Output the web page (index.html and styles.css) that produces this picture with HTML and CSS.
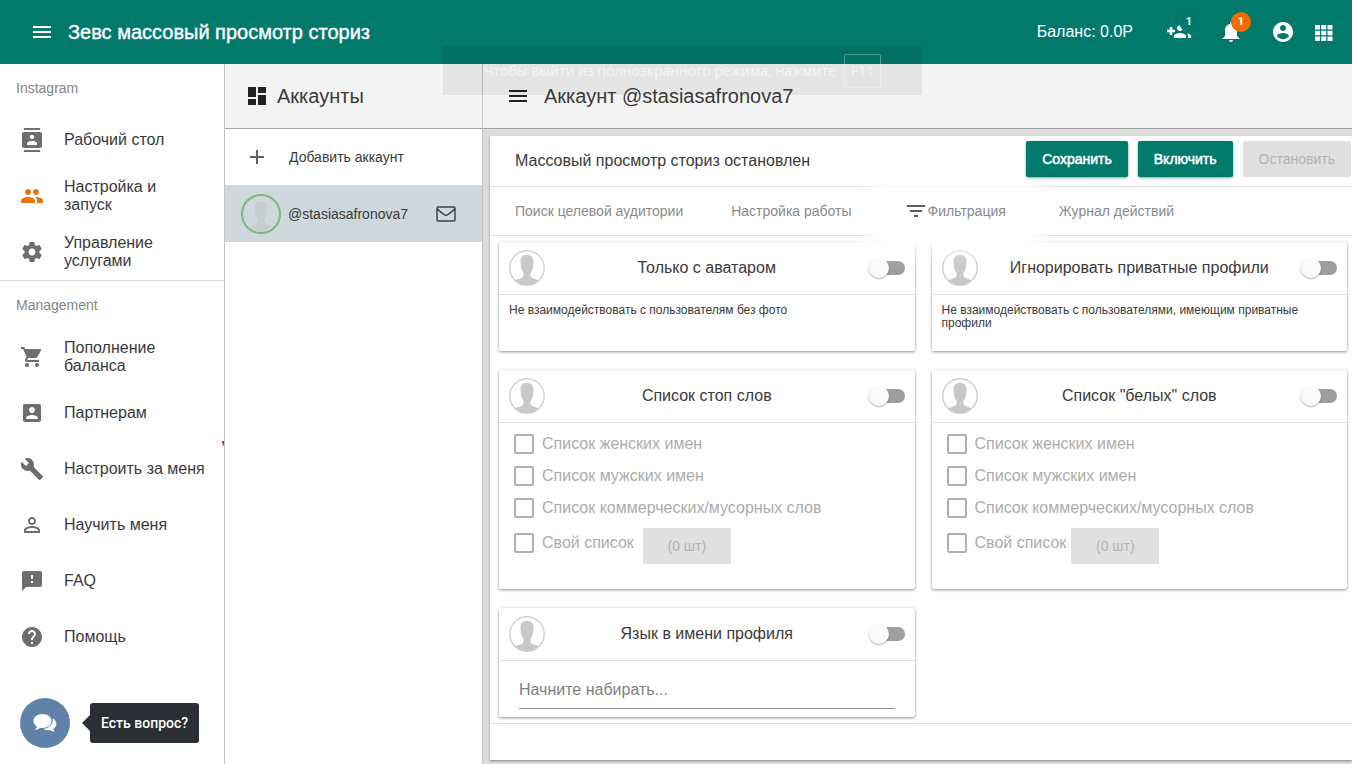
FILE: index.html
```html
<!DOCTYPE html>
<html lang="ru">
<head>
    <meta charset="utf-8">
    <meta name="viewport" content="width=device-width, initial-scale=1">
    <title>Зевс массовый просмотр сториз</title>
    <link rel="stylesheet" href="styles.css">
</head>
<body>
    <svg class="sprite" aria-hidden="true">
        <symbol id="menu" viewBox="0 0 24 24"><path d="M3 18h18v-2H3v2zm0-5h18v-2H3v2zm0-7v2h18V6H3z"/></symbol>
        <symbol id="avatar" viewBox="0 0 36 36">
            <circle cx="18" cy="18" r="17.200" fill="#fff" stroke="#d0d0d0" stroke-width="1.400"/>
            <path fill="#c8c8c8" d="M18 5c-5 0-6.500 2.500-6.500 6.500 0 4.500.8 8.500 3 11.500v3c-.5 2.500-5.500 2.800-8.200 4.200C9 33.300 13 35.200 18 35.200s9-1.900 11.700-5c-2.700-1.400-7.700-1.700-8.200-4.200v-3c2.200-3 3-7 3-11.500C24.500 7.500 23 5 18 5z"/>
        </symbol>
    </svg>

    <header class="header">
        <button class="icon-btn" aria-label="Меню"><svg class="icon"><use href="#menu"/></svg></button>
        <h1 class="header-title">Зевс массовый просмотр сториз</h1>
        <span class="balance">Баланс: 0.0Р</span>
        <div class="header-actions">
            <button class="icon-btn" aria-label="Рефералы">
                <svg class="icon" viewBox="0 0 24 24"><path d="M8 9.700H5.300V7H2.700v2.700H0v2.600h2.700V15h2.600v-2.700H8V9.700zm10 1.300c1.660 0 2.990-1.340 2.990-3S19.660 5 18 5c-.32 0-.63.05-.91.14.57.81.9 1.790.9 2.860s-.34 2.040-.9 2.860c.28.09.59.14.91.14zm-5 0c1.660 0 2.990-1.340 2.990-3S14.660 5 13 5s-3 1.340-3 3 1.340 3 3 3zm6.620 2.160c.83.73 1.380 1.660 1.380 2.840v2h3v-2c0-1.540-2.370-2.490-4.380-2.840zM13 13c-2 0-6 1-6 3v2h12v-2c0-2-4-3-6-3z"/></svg>
                <span class="badge">1</span>
            </button>
            <button class="icon-btn" aria-label="Уведомления">
                <svg class="icon" viewBox="0 0 24 24"><path d="M14 20a2 2 0 0 1-4 0h4zM12 2a1 1 0 0 1 1 1v1.080c2.840.48 5 2.950 5 5.920v6l3 3H3l3-3v-6c0-2.970 2.160-5.440 5-5.920V3a1 1 0 0 1 1-1z"/></svg>
                <span class="badge badge-orange">1</span>
            </button>
            <button class="icon-btn" aria-label="Профиль">
                <svg class="icon" viewBox="0 0 24 24"><path d="M12 2C6.480 2 2 6.480 2 12s4.480 10 10 10 10-4.480 10-10S17.520 2 12 2zm0 3c1.660 0 3 1.340 3 3s-1.340 3-3 3-3-1.340-3-3 1.340-3 3-3zm0 14.200c-2.500 0-4.710-1.280-6-3.220.03-1.990 4-3.080 6-3.080 1.990 0 5.970 1.090 6 3.080-1.290 1.940-3.500 3.220-6 3.220z"/></svg>
            </button>
        </div>
        <button class="icon-btn" aria-label="Приложения">
            <svg class="icon" viewBox="0 0 24 24"><path d="M3 5h5v4.500H3zM9.200 5h5v4.500h-5zM15.500 5h5v4.500h-5zM3 10.700h5v4.500H3zM9.200 10.700h5v4.500h-5zM15.500 10.700h5v4.500h-5zM3 16.400h5v4.500H3zM9.200 16.400h5v4.500h-5zM15.500 16.400h5v4.500h-5z"/></svg>
        </button>
    </header>

    <div class="layout">
        <nav class="sidebar">
            <div class="nav-group">
                <h2 class="nav-title">Instagram</h2>
                <a class="nav-item" href="#">
                    <svg class="icon" viewBox="0 0 24 24"><path d="M20 0H4v2h16V0zM4 24h16v-2H4v2zM20 4H4c-1.100 0-2 .9-2 2v12c0 1.100.9 2 2 2h16c1.100 0 2-.9 2-2V6c0-1.100-.9-2-2-2zm-8 2.750c1.240 0 2.250 1.010 2.250 2.250s-1.010 2.250-2.250 2.250S9.750 10.240 9.750 9 10.760 6.750 12 6.750zM17 17H7v-1.500c0-1.670 3.330-2.500 5-2.500s5 .83 5 2.500V17z"/></svg>
                    <span>Рабочий стол</span>
                </a>
                <a class="nav-item active" href="#">
                    <svg class="icon" viewBox="0 0 24 24"><path d="M16 11c1.660 0 2.990-1.340 2.990-3S17.660 5 16 5c-1.660 0-3 1.340-3 3s1.340 3 3 3zm-8 0c1.660 0 2.990-1.340 2.990-3S9.660 5 8 5C6.340 5 5 6.340 5 8s1.340 3 3 3zm0 2c-2.330 0-7 1.170-7 3.500V19h14v-2.500c0-2.330-4.670-3.500-7-3.500zm8 0c-.29 0-.62.02-.97.05 1.160.84 1.970 1.970 1.970 3.450V19h6v-2.500c0-2.330-4.670-3.500-7-3.500z"/></svg>
                    <span>Настройка и<br>запуск</span>
                </a>
                <a class="nav-item" href="#">
                    <svg class="icon" viewBox="0 0 24 24"><path d="M19.430 12.980c.04-.32.07-.64.07-.98s-.03-.66-.07-.98l2.110-1.650c.19-.15.24-.42.12-.64l-2-3.460c-.12-.22-.39-.3-.61-.22l-2.490 1c-.52-.4-1.080-.73-1.690-.98l-.38-2.650C14.460 2.180 14.250 2 14 2h-4c-.25 0-.46.18-.49.42l-.38 2.650c-.61.25-1.170.59-1.690.98l-2.490-1c-.23-.09-.49 0-.61.22l-2 3.460c-.13.22-.07.49.12.64l2.110 1.650c-.04.32-.07.65-.07.98s.03.66.07.98l-2.110 1.650c-.19.15-.24.42-.12.64l2 3.460c.12.22.39.3.61.22l2.490-1c.52.4 1.080.73 1.690.98l.38 2.650c.03.24.24.42.49.42h4c.25 0 .46-.18.49-.42l.38-2.650c.61-.25 1.170-.59 1.690-.98l2.490 1c.23.09.49 0 .61-.22l2-3.460c.12-.22.07-.49-.12-.64l-2.110-1.650zM12 15.500c-1.930 0-3.500-1.570-3.500-3.500s1.570-3.500 3.500-3.500 3.500 1.570 3.500 3.500-1.570 3.500-3.500 3.500z"/></svg>
                    <span>Управление услугами</span>
                </a>
            </div>
            <div class="nav-group">
                <h2 class="nav-title">Management</h2>
                <a class="nav-item" href="#">
                    <svg class="icon" viewBox="0 0 24 24"><path d="M7 18c-1.100 0-1.990.9-1.990 2S5.900 22 7 22s2-.9 2-2-.9-2-2-2zM1 2v2h2l3.600 7.590-1.350 2.450c-.16.28-.25.61-.25.96 0 1.100.9 2 2 2h12v-2H7.420c-.14 0-.25-.11-.25-.25l.03-.12.9-1.630h7.450c.75 0 1.410-.41 1.750-1.030l3.580-6.490c.08-.14.12-.31.12-.48 0-.55-.45-1-1-1H5.210l-.94-2H1zm16 16c-1.100 0-1.990.9-1.990 2s.89 2 1.990 2 2-.9 2-2-.9-2-2-2z"/></svg>
                    <span>Пополнение баланса</span>
                </a>
                <a class="nav-item" href="#">
                    <svg class="icon" viewBox="0 0 24 24"><path d="M3 5v14c0 1.100.89 2 2 2h14c1.100 0 2-.9 2-2V5c0-1.100-.9-2-2-2H5c-1.110 0-2 .9-2 2zm12 4c0 1.660-1.340 3-3 3s-3-1.340-3-3 1.340-3 3-3 3 1.340 3 3zm-9 8c0-2 4-3.100 6-3.100s6 1.100 6 3.100v1H6v-1z"/></svg>
                    <span>Партнерам</span>
                </a>
                <a class="nav-item nav-item-new" href="#">
                    <svg class="icon" viewBox="0 0 24 24"><path d="M22.700 19l-9.100-9.100c.9-2.300.4-5-1.500-6.900-2-2-5-2.400-7.400-1.300L9 6 6 9 1.600 4.700C.4 7.100.9 10.100 2.900 12.100c1.900 1.900 4.600 2.400 6.900 1.500l9.100 9.100c.4.4 1 .4 1.400 0l2.300-2.300c.5-.4.5-1.100.1-1.400z"/></svg>
                    <span>Настроить за меня</span>
                </a>
                <a class="nav-item" href="#">
                    <svg class="icon" viewBox="0 0 24 24"><path d="M12 5.900c1.160 0 2.100.94 2.100 2.100s-.94 2.100-2.100 2.100S9.900 9.160 9.900 8s.94-2.100 2.100-2.100m0 9c2.970 0 6.100 1.460 6.100 2.100v1.100H5.900V17c0-.64 3.130-2.100 6.100-2.100M12 4C9.790 4 8 5.790 8 8s1.790 4 4 4 4-1.790 4-4-1.790-4-4-4zm0 9c-2.670 0-8 1.340-8 4v3h16v-3c0-2.660-5.330-4-8-4z"/></svg>
                    <span>Научить меня</span>
                </a>
                <a class="nav-item" href="#">
                    <svg class="icon" viewBox="0 0 24 24"><path d="M20 2H4c-1.100 0-1.990.9-1.990 2L2 22l4-4h14c1.100 0 2-.9 2-2V4c0-1.100-.9-2-2-2zm-7 12h-2v-2h2v2zm0-4h-2V6h2v4z"/></svg>
                    <span>FAQ</span>
                </a>
                <a class="nav-item" href="#">
                    <svg class="icon" viewBox="0 0 24 24"><path d="M12 2C6.480 2 2 6.480 2 12s4.480 10 10 10 10-4.480 10-10S17.520 2 12 2zm1 17h-2v-2h2v2zm2.070-7.750l-.9.92C13.450 12.900 13 13.500 13 15h-2v-.5c0-1.100.45-2.100 1.170-2.830l1.240-1.260c.37-.36.59-.86.59-1.410 0-1.100-.9-2-2-2s-2 .9-2 2H8c0-2.210 1.790-4 4-4s4 1.790 4 4c0 .88-.36 1.680-.93 2.250z"/></svg>
                    <span>Помощь</span>
                </a>
            </div>
        </nav>

        <section class="accounts">
            <div class="toolbar">
                <svg class="icon" viewBox="0 0 24 24"><path d="M3 13h8V3H3v10zm0 8h8v-6H3v6zm10 0h8V11h-8v10zm0-18v6h8V3h-8z"/></svg>
                <h2 class="toolbar-title">Аккаунты</h2>
            </div>
            <button class="account-row add-account">
                <svg class="icon" viewBox="0 0 24 24"><path d="M19 13h-6v6h-2v-6H5v-2h6V5h2v6h6v2z"/></svg>
                <span>Добавить аккаунт</span>
            </button>
            <a class="account-row selected" href="#">
                <svg class="account-photo" viewBox="0 0 40 40">
                    <circle cx="20" cy="20" r="19" fill="none" stroke="#7cb97f" stroke-width="2"/>
                    <path fill="#c9cccd" d="M20 7c-5 0-6.500 2.500-6.500 6.500 0 4.500.8 8.500 3 11.500v3c-.5 2.500-4.500 3-6.500 4.500 2.500 3 6 4.500 10 4.500s7.500-1.500 10-4.500c-2-1.500-6-2-6.500-4.500v-3c2.200-3 3-7 3-11.500C26.500 9.500 25 7 20 7z"/>
                </svg>
                <span>@stasiasafronova7</span>
                <svg class="mail" viewBox="0 0 20 16"><path d="M1 2.500V14q0 1 1 1h16q1 0 1-1V2q0-1-1-1H2Q1 1 1 2.500q1.500 2 7 6 2 1.500 4 0 5.500-4 7-6" fill="none" stroke="currentColor" stroke-width="1.500"/></svg>
            </a>
        </section>

        <main class="main">
            <div class="toolbar">
                <button class="icon-btn" aria-label="Список аккаунтов"><svg class="icon"><use href="#menu"/></svg></button>
                <h2 class="toolbar-title">Аккаунт @stasiasafronova7</h2>
            </div>
            <div class="content">
                <div class="panel">
                    <div class="panel-head">
                        <h3 class="panel-title">Массовый просмотр сториз остановлен</h3>
                        <button class="btn btn-primary">Сохранить</button>
                        <button class="btn btn-primary">Включить</button>
                        <button class="btn" disabled>Остановить</button>
                    </div>
                    <div class="tabs">
                        <a class="tab" href="#">Поиск целевой аудитории</a>
                        <a class="tab" href="#">Настройка работы</a>
                        <a class="tab tab-active" href="#">
                            <svg class="icon" viewBox="0 0 24 24"><path d="M10 18h4v-2h-4v2zM3 6v2h18V6H3zm3 7h12v-2H6v2z"/></svg>
                            <span>Фильтрация</span>
                        </a>
                        <a class="tab" href="#">Журнал действий</a>
                    </div>

                    <div class="cards">
                        <section class="card">
                            <div class="card-head">
                                <svg class="avatar"><use href="#avatar"/></svg>
                                <label class="card-title" for="onlyAvatar">Только с аватаром</label>
                                <input class="switch" type="checkbox" id="onlyAvatar">
                            </div>
                            <p class="card-text">Не взаимодействовать с пользователям без фото</p>
                        </section>
                        <section class="card">
                            <div class="card-head">
                                <svg class="avatar"><use href="#avatar"/></svg>
                                <label class="card-title" for="skipPrivate">Игнорировать приватные профили</label>
                                <input class="switch" type="checkbox" id="skipPrivate">
                            </div>
                            <p class="card-text">Не взаимодействовать с пользователями, имеющим приватные профили</p>
                        </section>
                        <section class="card">
                            <div class="card-head">
                                <svg class="avatar"><use href="#avatar"/></svg>
                                <label class="card-title" for="stopWords">Список стоп слов</label>
                                <input class="switch" type="checkbox" id="stopWords">
                            </div>
                            <div class="lists">
                                <label class="check"><input type="checkbox" disabled>Список женских имен</label>
                                <label class="check"><input type="checkbox" disabled>Список мужских имен</label>
                                <label class="check"><input type="checkbox" disabled>Список коммерческих/мусорных слов</label>
                                <div class="own-list">
                                    <label class="check"><input type="checkbox" disabled>Свой список</label>
                                    <button class="btn btn-count" disabled>(0 шт)</button>
                                </div>
                            </div>
                        </section>
                        <section class="card">
                            <div class="card-head">
                                <svg class="avatar"><use href="#avatar"/></svg>
                                <label class="card-title" for="whiteWords">Список "белых" слов</label>
                                <input class="switch" type="checkbox" id="whiteWords">
                            </div>
                            <div class="lists">
                                <label class="check"><input type="checkbox" disabled>Список женских имен</label>
                                <label class="check"><input type="checkbox" disabled>Список мужских имен</label>
                                <label class="check"><input type="checkbox" disabled>Список коммерческих/мусорных слов</label>
                                <div class="own-list own-list-tight">
                                    <label class="check"><input type="checkbox" disabled>Свой список</label>
                                    <button class="btn btn-count" disabled>(0 шт)</button>
                                </div>
                            </div>
                        </section>
                        <section class="card">
                            <div class="card-head">
                                <svg class="avatar"><use href="#avatar"/></svg>
                                <label class="card-title" for="nameLang">Язык в имени профиля</label>
                                <input class="switch" type="checkbox" id="nameLang">
                            </div>
                            <div class="lang">
                                <input class="lang-input" type="text" placeholder="Начните набирать..." aria-label="Язык">
                            </div>
                        </section>
                    </div>
                    <div class="panel-foot"></div>
                </div>
            </div>
        </main>
    </div>

    <div class="fullscreen-hint">Чтобы выйти из полноэкранного режима, нажмите <kbd>F11</kbd></div>

    <div class="chat">
        <button class="chat-btn" aria-label="Чат">
            <svg class="chat-icon" viewBox="0 0 24 20"><path d="M9.500 1C4.500 1 .5 4 .5 8c0 2.300 1.300 4.200 3.300 5.500-.2 1.400-1 2.400-2 3.300 2.200 0 4-.8 5.200-2.100.8.200 1.600.3 2.500.3 5 0 9-3 9-7s-4-7-9-7z"/><path d="M19.700 5.300c.9 5.500-3.300 9.800-9.200 10.700 1.500 1.200 3.800 1.500 6.500 1.100 1.300 1 2.800 1.700 4.900 1.700-.9-.8-1.500-1.600-1.700-2.800 1.800-1 3.200-2.700 3.200-4.900 0-2.500-1.500-4.700-3.700-5.800z"/></svg>
        </button>
        <span class="chat-tip">Есть вопрос?</span>
    </div>
</body>
</html>
```
FILE: styles.css
```css
* {
    box-sizing: border-box;
}

body {
    margin: 0;
    min-height: 100vh;
    display: flex;
    flex-direction: column;
    font-family: "Liberation Sans", Arial, sans-serif;
    font-size: 16px;
    line-height: 18px;
    color: #3a3a3a;
    background: #fff;
}

h1, h2, h3, p {
    margin: 0;
    font-weight: normal;
}

a {
    color: inherit;
    text-decoration: none;
}

button {
    padding: 0;
    border: none;
    background: none;
    color: inherit;
    font-family: inherit;
    cursor: pointer;
}

.sprite {
    position: absolute;
    width: 0;
    height: 0;
}

.icon {
    display: block;
    width: 24px;
    height: 24px;
    flex-shrink: 0;
    fill: currentColor;
}

.icon-btn {
    position: relative;
    width: 24px;
    height: 24px;
}

/* header */
.header {
    display: flex;
    align-items: center;
    height: 64px;
    padding: 0 16px 0 30px;
    background: #01796b;
    color: #fff;
}

.header-title {
    flex: 1;
    margin-left: 14px;
    font-size: 20px;
    line-height: 24px;
    -webkit-text-stroke: 0.4px #fff;
}

.header-actions {
    display: flex;
    gap: 28px;
    margin: 0 17px 0 34px;
}

.badge {
    position: absolute;
    top: -8px;
    right: -8px;
    width: 20px;
    height: 20px;
    border-radius: 50%;
    background: #01796b;
    font: bold 11px/20px Roboto, sans-serif;
    text-align: center;
}

.badge-orange {
    background: #ef6c00;
}

/* layout */
.layout {
    display: flex;
    flex: 1;
}

.sidebar {
    width: 225px;
    flex-shrink: 0;
    border-right: 1px solid #c4c4c4;
}

.nav-group + .nav-group {
    border-top: 1px solid #dcdcdc;
}

.nav-title {
    padding: 0 16px;
    font-size: 14px;
    line-height: 48px;
    color: #858585;
}

.nav-item {
    position: relative;
    display: flex;
    align-items: center;
    gap: 20px;
    height: 56px;
    padding: 0 16px 0 20px;
    overflow: hidden;
}

    .nav-item .icon {
        color: #6e6e6e;
    }

    .nav-item.active .icon {
        color: #e8750a;
    }

/* dot tucked behind the sidebar edge */
.nav-item-new::after {
    content: "";
    position: absolute;
    top: -4px;
    right: -8px;
    width: 10px;
    height: 10px;
    border-radius: 50%;
    background: #c2304a;
}

.accounts {
    width: 258px;
    flex-shrink: 0;
    border-right: 1px solid #c4c4c4;
}

.toolbar {
    display: flex;
    align-items: center;
    height: 65px;
    padding: 0 20px;
    background: #f4f4f4;
    border-bottom: 1px solid #a2a2a2;
    color: #212121;
}

.toolbar-title {
    margin-left: 8px;
    font-size: 20px;
    line-height: 24px;
    color: #3a3a3a;
}

.account-row {
    display: flex;
    align-items: center;
    width: 100%;
    height: 56px;
    padding: 0 26px 0 16px;
    font-size: 14px;
    text-align: left;
}

    .account-row span {
        flex: 1;
    }

.add-account {
    gap: 20px;
    padding-left: 20px;
}

    .add-account .icon {
        color: #616161;
    }

.selected {
    gap: 7px;
    height: 57px;
    background: #cfd8dc;
}

.account-photo {
    width: 40px;
    height: 40px;
}

.mail {
    width: 20px;
    height: 16px;
    color: #37474f;
}

.main {
    display: flex;
    flex-direction: column;
    flex: 1;
    min-width: 0;
    background: #dcdcdc;
}

    .main .toolbar {
        padding-left: 23px;
    }

    .main .toolbar-title {
        margin-left: 14px;
    }

.content {
    padding: 7px 0 4px 7px;
}

.panel {
    background: #fff;
    box-shadow: 0 1px 2px rgba(0, 0, 0, 0.4);
}

.panel-head {
    display: flex;
    align-items: center;
    gap: 10px;
    height: 51px;
    padding: 0 1px 0 25px;
    border-bottom: 1px solid #e0e0e0;
}

    .panel-head .btn {
        position: relative;
        z-index: 2;
        margin-bottom: 4px;
    }

.panel-title {
    flex: 1;
    font-size: 16px;
}

.btn {
    height: 36px;
    padding: 0 16px;
    border-radius: 2px;
    font-size: 14px;
}

    .btn:disabled {
        background: #e0e0e0;
        color: #b4b4b4;
        cursor: default;
    }

.btn-primary {
    background: #01796b;
    color: #fff;
    -webkit-text-stroke: 0.5px #fff;
    box-shadow: 0 1px 3px rgba(0, 0, 0, 0.4);
}

/* tabs */
.tabs {
    position: relative;
    z-index: 1;
    display: flex;
    gap: 48px;
    height: 49px;
    padding-left: 25px;
    border-bottom: 1px solid #e0e0e0;
    font-size: 14px;
    color: #8a8a8a;
}

.tab {
    display: flex;
    align-items: center;
}

.tab-active {
    position: relative;
    margin: 0 5px 0 4px;
}

    .tab-active .icon {
        color: #5f5f5f;
    }

    /* soft highlight round the open tab */
    .tab-active::before {
        content: "";
        position: absolute;
        inset: 0 -26px -6px;
        z-index: -1;
        background: #fff;
        box-shadow: 0 0 18px 8px #fff;
    }

/* cards */
.cards {
    display: grid;
    grid-template-columns: 1fr 1fr;
    gap: 19px 17px;
    padding: 6px 5px 6px 9px;
}

.card {
    min-height: 109px;
    border-radius: 2px;
    background: #fff;
    box-shadow: 0 1px 3px rgba(0, 0, 0, 0.45);
}

.card-head {
    display: flex;
    align-items: center;
    height: 53px;
    padding: 0 10px;
    border-bottom: 1px solid #e0e0e0;
}

.avatar {
    width: 36px;
    height: 36px;
}

.card-title {
    flex: 1;
    text-align: center;
}

.switch {
    appearance: none;
    position: relative;
    width: 34px;
    height: 14px;
    margin: 0 0 0 2px;
    border-radius: 7px;
    background: #9e9e9e;
    cursor: pointer;
}

    .switch::before {
        content: "";
        position: absolute;
        top: -3px;
        left: -2px;
        width: 20px;
        height: 20px;
        border-radius: 50%;
        background: #fafafa;
        box-shadow: 0 1px 2px rgba(0, 0, 0, 0.3);
    }

    .switch:checked {
        background: #80bcb5;
    }

        .switch:checked::before {
            left: 16px;
            background: #01796b;
        }

.card-text {
    padding: 9px 10px;
    font-size: 12px;
    line-height: 13px;
}

.lists {
    padding: 5px 15px 25px;
    color: #acacac;
}

.check {
    display: flex;
    align-items: center;
    gap: 8px;
    height: 32px;
}

    .check input {
        appearance: none;
        width: 20px;
        height: 20px;
        margin: 0;
        border: 2px solid #b0b0b0;
        border-radius: 2px;
    }

.own-list {
    display: flex;
    align-items: flex-start;
    gap: 9px;
}

    .own-list .check {
        height: 38px;
    }

.own-list-tight {
    gap: 5px;
}

.btn-count {
    min-width: 88px;
    margin-top: 4px;
    border-radius: 0;
}

.lang {
    padding: 11px 20px 8px;
}

.lang-input {
    display: block;
    width: 100%;
    height: 37px;
    padding: 0;
    border: none;
    border-bottom: 1px solid #8e8e8e;
    outline: none;
    background: none;
    font: inherit;
}

    .lang-input::placeholder {
        color: #808080;
        opacity: 1;
    }

.panel-foot {
    height: 37px;
    border-top: 1px solid #e0e0e0;
}

/* fading fullscreen message */
.fullscreen-hint {
    position: absolute;
    top: 46px;
    left: 50%;
    z-index: 2;
    display: flex;
    align-items: center;
    justify-content: center;
    gap: 8px;
    width: 479px;
    height: 49px;
    margin-left: -233px;
    background: rgba(0, 0, 0, 0.06);
    color: rgba(255, 255, 255, 0.6);
    font: 14px/18px "Open Sans", sans-serif;
    pointer-events: none;
}

    .fullscreen-hint kbd {
        padding: 7px 6px;
        border: 1px solid rgba(255, 255, 255, 0.3);
        border-radius: 2px;
        font: inherit;
    }

/* chat */
.chat {
    position: fixed;
    left: 20px;
    bottom: 16px;
    display: flex;
    align-items: center;
    gap: 20px;
}

.chat-btn {
    display: flex;
    align-items: center;
    justify-content: center;
    width: 50px;
    height: 50px;
    border-radius: 50%;
    background: #6081a8;
}

.chat-icon {
    width: 24px;
    height: 20px;
    fill: #fff;
}

.chat-tip {
    position: relative;
    padding: 0 11px;
    border-radius: 3px;
    background: #2b2f33;
    color: #fff;
    font: 500 14px/40px Roboto, sans-serif;
}

    .chat-tip::before {
        content: "";
        position: absolute;
        top: 12px;
        left: -8px;
        border: solid transparent;
        border-width: 8px 8px 8px 0;
        border-right-color: #2b2f33;
    }
```
